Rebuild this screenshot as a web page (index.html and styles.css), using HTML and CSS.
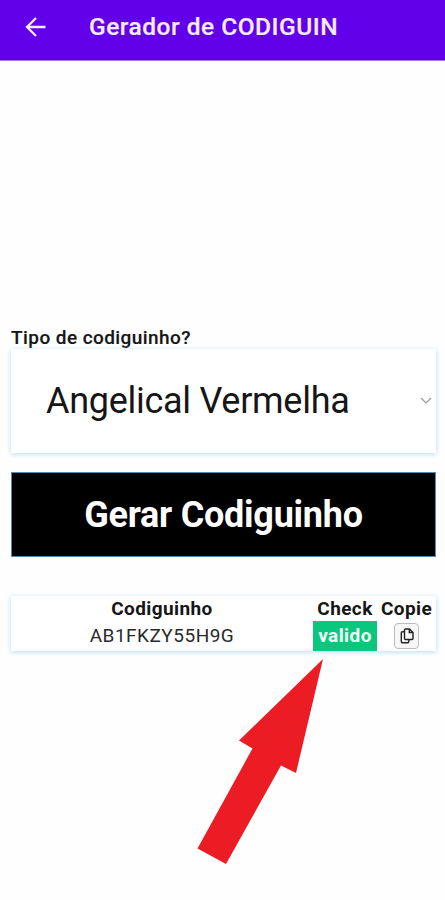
FILE: index.html
```html
<!DOCTYPE html>
<html lang="pt-BR">
<head>
<meta charset="utf-8">
<title>Gerador de CODIGUIN</title>
<link rel="stylesheet" href="styles.css">
</head>
<body>
<header class="app-bar">
  <svg class="back" viewBox="0 0 22 22" aria-hidden="true"><path d="M20.5 11H2M11 2L2 11l9 9"/></svg>
  <h1><span>Gerador de CODIGUIN</span></h1>
</header>
<main>
  <div class="label"><span>Tipo de codiguinho?</span></div>
  <div class="select">
    <span class="value">Angelical Vermelha</span>
    <svg class="chevron" viewBox="0 0 12 8" aria-hidden="true"><path d="M1 1l5 5 5-5"/></svg>
  </div>
  <button class="generate"><span>Gerar Codiguinho</span></button>
  <section class="results">
    <div class="head"><span>Codiguinho</span></div>
    <div class="head"><span>Check</span></div>
    <div class="head"><span>Copie</span></div>
    <div class="code"><span>AB1FKZY55H9G</span></div>
    <div class="valid"><span>valido</span></div>
    <button class="copy" aria-label="Copie">
      <svg viewBox="0 0 16 18" aria-hidden="true"><path d="M6.500 2h4l3.500 3.500v6q0 1-1 1H6.500q-1 0-1-1V3q0-1 1-1zM10.300 2v3.500H14M5.300 4.500l-2 .3q-1 .1-1 1.200v8.500q0 1.300 1.200 1.300H8.500q1 0 1.200-1l.3-2"/></svg>
    </button>
  </section>
</main>
<svg class="pointer" viewBox="0 0 128 207" aria-hidden="true"><path d="M126 1L42 82.5 55.5 90.5.5 190.5 29 206 84 107.500 99 115z"/></svg>
</body>
</html>
```
FILE: styles.css
```css
* { box-sizing: border-box; }
body {
  margin: 0;
  min-height: 900px;
  background: #fefefe;
  color: #161616;
  font-family: Roboto, "Liberation Sans", sans-serif;
  overflow: hidden;
}
span { white-space: nowrap; }
.app-bar {
  display: flex;
  align-items: center;
  height: 61px;
  padding: 0 0 6px 25px;
  background: #6200ea;
  border-bottom: 1px solid #a875ed;
  color: #f5ecff;
}
.back { width: 22px; height: 22px; fill: none; stroke: currentColor; stroke-width: 2.3; }
h1 { margin: 0 0 0 42px; font-size: 24.5px; font-weight: 500; line-height: 30px; letter-spacing: .5px; -webkit-text-stroke: .2px currentColor; }
main { display: flex; flex-direction: column; padding: 266px 9px 0 11px; }
.label { height: 22px; font-size: 19px; font-weight: 500; line-height: 22px; letter-spacing: .43px; -webkit-text-stroke: .15px currentColor; }
.select {
  display: flex;
  align-items: center;
  justify-content: space-between;
  height: 104px;
  padding: 0 4px 1px 35px;
  background: #fff;
  box-shadow: 0 1px 5px #b5dff3;
}
.value { font-size: 36px; font-weight: 400; line-height: 44px; letter-spacing: -.28px; }
.chevron { width: 12px; height: 8px; fill: none; stroke: #999; stroke-width: 1.2; }
.generate {
  height: 85px;
  margin-top: 19px;
  padding: 0;
  border: 1px solid #528cb5;
  background: #000;
  color: #fff;
  font: 700 36px/44px Roboto, sans-serif;
  letter-spacing: -.25px;
}
.results {
  display: grid;
  grid-template-columns: 302px 64px 59px;
  grid-template-rows: 25px 30px;
  height: 55px;
  margin-top: 39px;
  background: #fff;
  box-shadow: 0 1px 5px #b5dff3;
  font-size: 19px;
  text-align: center;
}
.head { font-weight: 700; line-height: 25px; letter-spacing: .4px; }
.code { line-height: 30px; color: #2a2a2a; letter-spacing: .5px; }
.valid { background: #0bc77d; color: #f2fff9; font-weight: 700; line-height: 30px; letter-spacing: .4px; }
.copy {
  display: flex;
  align-items: center;
  justify-content: center;
  place-self: center;
  width: 25px;
  height: 26px;
  padding: 0;
  border: 1px solid #bcbcbc;
  border-radius: 4px;
  background: #f7f7f7;
}
.copy svg { width: 16px; height: 18px; fill: none; stroke: #222; stroke-width: 1.4; }
.pointer { position: absolute; left: 196.5px; top: 658px; width: 128px; height: 207px; fill: #eb1c24; }
```
